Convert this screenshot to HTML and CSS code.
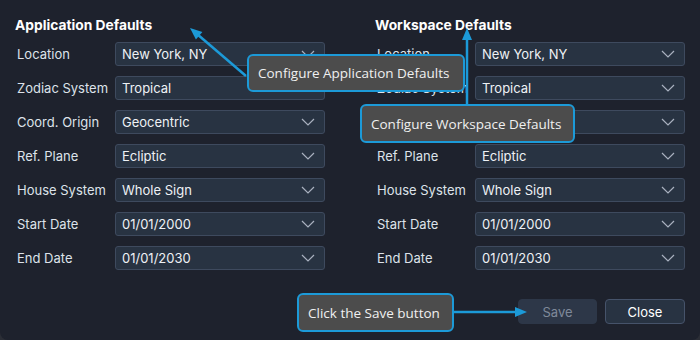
FILE: index.html
```html
<!DOCTYPE html>
<html>
<head>
<meta charset="utf-8">
<link rel="stylesheet" href="styles.css">
</head>
<body>
<div class="dialog">
  <div class="columns">
    <section class="col">
      <h2 class="heading">Application Defaults</h2>
      <div class="rows">
        <div class="row"><span class="label">Location</span><div class="select"><span>New York, NY</span><svg class="chev" viewBox="0 0 14 8"><path d="M1 1 L7 7 L13 1"/></svg></div></div>
        <div class="row"><span class="label">Zodiac System</span><div class="select"><span>Tropical</span><svg class="chev" viewBox="0 0 14 8"><path d="M1 1 L7 7 L13 1"/></svg></div></div>
        <div class="row"><span class="label">Coord. Origin</span><div class="select"><span>Geocentric</span><svg class="chev" viewBox="0 0 14 8"><path d="M1 1 L7 7 L13 1"/></svg></div></div>
        <div class="row"><span class="label">Ref. Plane</span><div class="select"><span>Ecliptic</span><svg class="chev" viewBox="0 0 14 8"><path d="M1 1 L7 7 L13 1"/></svg></div></div>
        <div class="row"><span class="label">House System</span><div class="select"><span>Whole Sign</span><svg class="chev" viewBox="0 0 14 8"><path d="M1 1 L7 7 L13 1"/></svg></div></div>
        <div class="row"><span class="label">Start Date</span><div class="select"><span>01/01/2000</span><svg class="chev" viewBox="0 0 14 8"><path d="M1 1 L7 7 L13 1"/></svg></div></div>
        <div class="row"><span class="label">End Date</span><div class="select"><span>01/01/2030</span><svg class="chev" viewBox="0 0 14 8"><path d="M1 1 L7 7 L13 1"/></svg></div></div>
      </div>
    </section>
    <section class="col">
      <h2 class="heading">Workspace Defaults</h2>
      <div class="rows">
        <div class="row"><span class="label">Location</span><div class="select"><span>New York, NY</span><svg class="chev" viewBox="0 0 14 8"><path d="M1 1 L7 7 L13 1"/></svg></div></div>
        <div class="row"><span class="label">Zodiac System</span><div class="select"><span>Tropical</span><svg class="chev" viewBox="0 0 14 8"><path d="M1 1 L7 7 L13 1"/></svg></div></div>
        <div class="row"><span class="label">Coord. Origin</span><div class="select"><span>Geocentric</span><svg class="chev" viewBox="0 0 14 8"><path d="M1 1 L7 7 L13 1"/></svg></div></div>
        <div class="row"><span class="label">Ref. Plane</span><div class="select"><span>Ecliptic</span><svg class="chev" viewBox="0 0 14 8"><path d="M1 1 L7 7 L13 1"/></svg></div></div>
        <div class="row"><span class="label">House System</span><div class="select"><span>Whole Sign</span><svg class="chev" viewBox="0 0 14 8"><path d="M1 1 L7 7 L13 1"/></svg></div></div>
        <div class="row"><span class="label">Start Date</span><div class="select"><span>01/01/2000</span><svg class="chev" viewBox="0 0 14 8"><path d="M1 1 L7 7 L13 1"/></svg></div></div>
        <div class="row"><span class="label">End Date</span><div class="select"><span>01/01/2030</span><svg class="chev" viewBox="0 0 14 8"><path d="M1 1 L7 7 L13 1"/></svg></div></div>
      </div>
    </section>
  </div>
  <div class="footer">
    <button class="btn btn-save">Save</button>
    <button class="btn btn-close">Close</button>
  </div>

  <svg class="arrows" viewBox="0 0 700 340" width="700" height="340">
    <line x1="246" y1="76" x2="197" y2="34"/>
    <polygon points="190,28 202.4,32 195.9,39.6"/>
    <line x1="467" y1="104" x2="467" y2="38"/>
    <polygon points="467,28 472,40 462,40"/>
    <line x1="454" y1="312" x2="517" y2="312"/>
    <polygon points="527,312 515,307 515,317"/>
  </svg>

  <div class="callout callout-app">Configure Application Defaults</div>
  <div class="callout callout-ws">Configure Workspace Defaults</div>
  <div class="callout callout-save">Click the Save button</div>
</div>
</body>
</html>
```

FILE: styles.css
```css
html, body {
  margin: 0;
  padding: 0;
  background: #2b2e36;
}

.dialog {
  position: relative;
  width: 700px;
  height: 340px;
  box-sizing: border-box;
  padding: 15px 15px 0 15px;
  background: #1e222d;
  border-radius: 0 0 8px 8px;
  font-family: "Inter", "Noto Sans", sans-serif;
  color: #dfe3ea;
  overflow: hidden;
}

.columns {
  display: grid;
  grid-template-columns: 310px 310px;
  column-gap: 50px;
}

.heading {
  margin: 0 0 7px 0;
  font-size: 13.8px;
  line-height: 20px;
  font-weight: 700;
  color: #ffffff;
}

.rows {
  display: flex;
  flex-direction: column;
  gap: 10px;
}

.row {
  display: flex;
  align-items: center;
  height: 24px;
}

.label {
  width: 98px;
  padding-left: 2px;
  font-size: 13px;
  color: #dde2ea;
}

.select {
  display: flex;
  align-items: center;
  justify-content: space-between;
  width: 210px;
  height: 24px;
  box-sizing: border-box;
  padding: 0 9px 0 6px;
  background: #283342;
  border: 1px solid #3e4a5e;
  border-radius: 3px;
  font-size: 13px;
  color: #eef1f5;
}

.chev {
  width: 14px;
  height: 8px;
  fill: none;
  stroke: #a9b1bf;
  stroke-width: 1.2;
}

.footer {
  display: flex;
  justify-content: flex-end;
  gap: 8px;
  margin-top: 29px;
}

.btn {
  height: 25px;
  width: 80px;
  box-sizing: border-box;
  border-radius: 4px;
  font-family: "Inter", "Noto Sans", sans-serif;
  font-size: 13px;
  padding: 0;
}

.btn-save {
  width: 79px;
  background: #2d3748;
  border: 1px solid #2d3748;
  color: #7f899a;
}

.btn-close {
  background: #283342;
  border: 1px solid #46536a;
  color: #ffffff;
}

.arrows {
  position: absolute;
  left: 0;
  top: 0;
  pointer-events: none;
}

.arrows line {
  stroke: #1c9ad8;
  stroke-width: 2.5;
}

.arrows polygon {
  fill: #1c9ad8;
}

.callout {
  position: absolute;
  box-sizing: border-box;
  display: flex;
  align-items: center;
  padding: 0 9px;
  background: #4c4c4c;
  border: 2px solid #1c9ad8;
  border-radius: 6px;
  font-family: "Open Sans", "Noto Sans", sans-serif;
  font-size: 13.5px;
  color: #f0f0f0;
  white-space: nowrap;
}

.callout-app {
  left: 247px;
  top: 54px;
  width: 218px;
  height: 38px;
}

.callout-ws {
  left: 360px;
  top: 104px;
  width: 215px;
  height: 39px;
}

.callout-save {
  left: 297px;
  top: 293px;
  width: 157px;
  height: 39px;
}
```
